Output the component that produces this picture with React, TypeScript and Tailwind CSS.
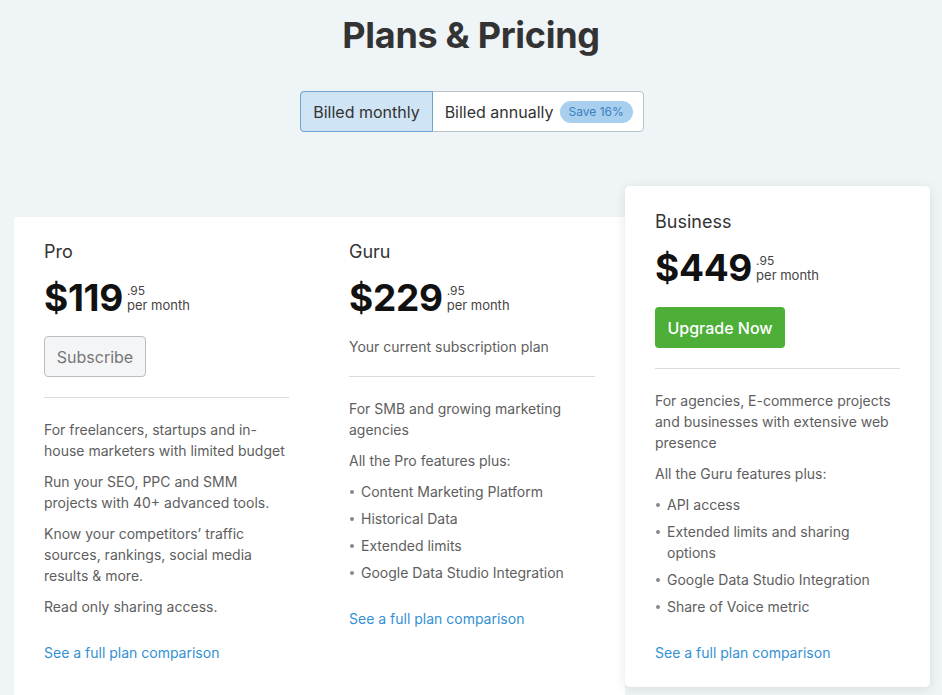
import React from 'react';

interface Plan {
  name: string;
  price: string;
  intro: string[];
  listTitle?: string;
  features?: string[];
}

const plans: Plan[] = [
  {
    name: 'Pro',
    price: '$119',
    intro: [
      'For freelancers, startups and in-house marketers with limited budget',
      'Run your SEO, PPC and SMM projects with 40+ advanced tools.',
      'Know your competitors’ traffic sources, rankings, social media results & more.',
      'Read only sharing access.',
    ],
  },
  {
    name: 'Guru',
    price: '$229',
    intro: ['For SMB and growing marketing agencies'],
    listTitle: 'All the Pro features plus:',
    features: ['Content Marketing Platform', 'Historical Data', 'Extended limits', 'Google Data Studio Integration'],
  },
  {
    name: 'Business',
    price: '$449',
    intro: ['For agencies, E-commerce projects and businesses with extensive web presence'],
    listTitle: 'All the Guru features plus:',
    features: ['API access', 'Extended limits and sharing options', 'Google Data Studio Integration', 'Share of Voice metric'],
  },
];

function Price({ value }: { value: string }) {
  return (
    <div className="mt-[14px] flex items-center">
      <span className="text-[37px] leading-[40px] font-bold text-[#111] tracking-[-0.3px]">{value}</span>
      <div className="ml-[4px] flex flex-col text-[#444]">
        <span className="text-[12px] leading-[14px]">.95</span>
        <span className="text-[13px] leading-[14px]">per month</span>
      </div>
    </div>
  );
}

function PlanBody({ plan }: { plan: Plan }) {
  return (
    <div className="mt-[21px] text-[14px] leading-[21px] text-[#5e5e5e]">
      {plan.intro.map((p) => (
        <p key={p} className="mb-[10px]">
          {p}
        </p>
      ))}
      {plan.listTitle && <p className="mb-[10px]">{plan.listTitle}</p>}
      {plan.features && (
        <ul className="flex flex-col gap-[6px]">
          {plan.features.map((f) => (
            <li key={f} className="flex items-start">
              <span className="mt-[9px] ml-[1px] mr-[7px] h-[4px] w-[4px] shrink-0 rounded-full bg-[#888]" />
              <span>{f}</span>
            </li>
          ))}
        </ul>
      )}
      <a href="#" className="mt-[25px] block text-[#3391d3]">
        See a full plan comparison
      </a>
    </div>
  );
}

export default function App() {
  const [pro, guru, business] = plans;
  return (
    <div
      className="min-h-screen bg-[#eff4f7] overflow-hidden"
      style={{ fontFamily: 'Inter, "Noto Sans", sans-serif' }}
    >
      {/* Header */}
      <h1 className="pt-[15px] text-center text-[36px] leading-[40px] font-bold text-[#333] tracking-[-0.3px]">
        Plans &amp; Pricing
      </h1>

      {/* Billing toggle */}
      <div className="mt-[36px] flex justify-center">
        <div className="ml-[2px] flex h-[41px] rounded-[4px] border border-[#b9c3cb] bg-white">
          <button className="-m-px flex items-center rounded-l-[4px] border border-[#6ea4cf] bg-[#cfe4f4] px-[12px] text-[16px] text-[#333]">
            Billed monthly
          </button>
          <button className="flex items-center pl-[13px] pr-[10px] text-[16px] text-[#333]">
            Billed annually
            <span className="ml-[6px] rounded-full bg-[#a9cfee] px-[9px] py-[3px] text-[12px] leading-[16px] text-[#3b7fc2]">
              Save 16%
            </span>
          </button>
        </div>
      </div>

      {/* Plans */}
      <div className="mt-[54px] ml-[14px] flex items-start">
        <div className="mt-[31px] flex w-[611px] rounded-tl-[4px] bg-white pb-[40px]">
          {/* Pro */}
          <div className="w-[305px] px-[30px] pt-[23px]">
            <h2 className="text-[18px] leading-[24px] text-[#333]">{pro.name}</h2>
            <Price value={pro.price} />
            <button className="mt-[18px] h-[41px] w-[102px] rounded-[4px] border border-[#bdbdbd] bg-[#f4f5f6] text-[16px] text-[#777]">
              Subscribe
            </button>
            <div className="mt-[20px] h-px bg-[#dcdcdc]" />
            <PlanBody plan={pro} />
          </div>

          {/* Guru */}
          <div className="w-[306px] px-[30px] pt-[23px]">
            <h2 className="text-[18px] leading-[24px] text-[#333]">{guru.name}</h2>
            <Price value={guru.price} />
            <p className="mt-[18px] text-[14px] leading-[21px] text-[#5e5e5e]">Your current subscription plan</p>
            <div className="mt-[19px] h-px bg-[#dcdcdc]" />
            <PlanBody plan={guru} />
          </div>
        </div>

        {/* Business */}
        <div className="w-[305px] rounded-[5px] bg-white px-[30px] pt-[24px] pb-[24px] shadow-[0_2px_12px_rgba(0,0,0,0.1)]">
          <h2 className="text-[18px] leading-[24px] text-[#333]">{business.name}</h2>
          <Price value={business.price} />
          <button className="mt-[19px] h-[41px] w-[130px] rounded-[4px] bg-[#4dae38] text-[16px] font-medium text-white">
            Upgrade Now
          </button>
          <div className="mt-[20px] h-px bg-[#dcdcdc]" />
          <PlanBody plan={business} />
        </div>
      </div>
    </div>
  );
}
